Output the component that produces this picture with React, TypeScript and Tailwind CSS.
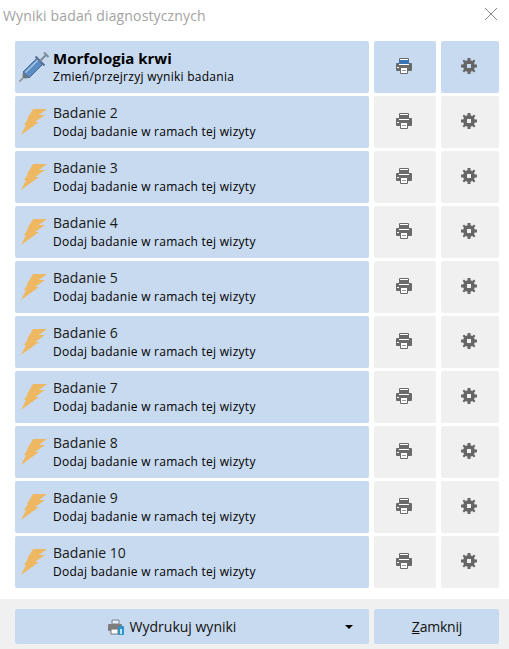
function Syringe() {
    return <svg width="32" height="32" viewBox="0 0 32 32" className="shrink-0">
        <path d="M1.5 30.5 L8 24" stroke="#8a8f94" strokeWidth="1.6" fill="none" />
        <path d="M5 21 L19 7 L25 13 L11 27 Z" fill="#5b8dc4" stroke="#44658c" strokeWidth="1" />
        <path d="M7.5 21.5 L20 9" stroke="#a9c8e8" strokeWidth="1.5" fill="none" />
        <path d="M4.5 25.5 L5 21 L11 27 L6.5 27.5 Z" fill="#6b7680" />
        <path d="M17.5 5.5 L26.5 14.5" stroke="#55708f" strokeWidth="2" />
        <path d="M22 10 L28 4 M26 1.5 L30.5 6" stroke="#7d8c9b" strokeWidth="2" fill="none" />
    </svg>
}

function Bolt() {
    return <svg width="28" height="28" viewBox="0 0 28 28" className="shrink-0">
        <path d="M13 1 L27 1 L19 7 L25 7 L15 14 L19 14 L1 27 L6 17 L4 17 L8 11 L7 11 Z" fill="#eeb863" />
    </svg>
}

function Printer({ accent }: { accent: string }) {
    return <svg width="16" height="16" viewBox="0 0 16 16">
        <path d="M3.5 0.5 H12.5 V5 H3.5 Z" fill="#fff" stroke="#6a6a6a" strokeWidth="1" />
        <rect x="0" y="5" width="16" height="8" rx="1" fill="#6a6a6a" />
        <rect x="3" y="2" width="10" height="4" fill={accent} />
        <rect x="3" y="6" width="10" height="1" fill="#fff" />
        <rect x="1" y="9" width="2" height="1" fill="#fff" />
        <path d="M4.5 9.5 H11.5 V15.5 H4.5 Z" fill="#fff" stroke="#6a6a6a" strokeWidth="1" />
        <rect x="6" y="12" width="4" height="1" fill="#9a9a9a" />
    </svg>
}

function Gear() {
    return <svg width="16" height="16" viewBox="0 0 16 16">
        <path d="M6.5 0 H9.5 V2.2 L11.3 3 L13 1.6 L14.4 3 L13 4.7 L13.8 6.5 H16 V9.5 H13.8 L13 11.3 L14.4 13 L13 14.4 L11.3 13 L9.5 13.8 V16 H6.5 V13.8 L4.7 13 L3 14.4 L1.6 13 L3 11.3 L2.2 9.5 H0 V6.5 H2.2 L3 4.7 L1.6 3 L3 1.6 L4.7 3 L6.5 2.2 Z M6 6 V10 H10 V6 Z" fill="#666666" fillRule="evenodd" />
    </svg>
}

function Row({ title, sub, active }: { title: string; sub: string; active?: boolean }) {
    const side = active ? "bg-[#c8daef]" : "bg-[#f0f0f0]"
    return <div className="flex gap-[5px] h-[52px]">
        <div className="w-[354px] bg-[#c8daef] rounded-[2px] flex items-center">
            <div className={active ? "w-[38px] pl-[3px]" : "w-[38px] pl-[5px]"}>
                {active ? <Syringe /> : <Bolt />}
            </div>
            <div className="flex flex-col pb-[1px]">
                <span className={active ? "text-[15px] leading-[20px] font-bold text-black" : "text-[14px] leading-[20px] text-[#1a1a1a]"}>{title}</span>
                <span className="text-[12px] leading-[17px] text-black tracking-[0.27px]">{sub}</span>
            </div>
        </div>
        <div className={`w-[62px] rounded-[2px] flex items-center justify-center pr-[2px] pb-[2px] ${side}`}>
            <Printer accent={active ? "#3a74b4" : "#6a6a6a"} />
        </div>
        <div className={`w-[58px] rounded-[2px] flex items-center justify-center pr-[2px] pb-[2px] ${side}`}>
            <Gear />
        </div>
    </div>
}

export default function App() {
    const rows = [2, 3, 4, 5, 6, 7, 8, 9, 10]

    return <div className="w-[509px] h-[649px] bg-white flex flex-col overflow-hidden font-['Open_Sans',sans-serif]">
        <div className="h-[41px] flex justify-between pl-[3px] pr-[11px] pt-[6px]">
            <span className="text-[14px] leading-[19px] text-[#a3a3a3] tracking-[0.14px]">Wyniki badań diagnostycznych</span>
            <svg width="14" height="14" viewBox="0 0 14 14" className="mt-[1px]">
                <path d="M1 1 L13 13 M13 1 L1 13" stroke="#8c8c8c" strokeWidth="1" />
            </svg>
        </div>
        <div className="flex flex-col gap-[3px] pl-[15px]">
            <Row title="Morfologia krwi" sub="Zmień/przejrzyj wyniki badania" active />
            {rows.map(n => <Row key={n} title={`Badanie ${n}`} sub="Dodaj badanie w ramach tej wizyty" />)}
        </div>
        <div className="mt-[11px] flex-1 bg-[#f0f0f0] flex gap-[5px] pl-[15px] pt-[10px]">
            <div className="w-[354px] h-[35px] bg-[#c8daef] rounded-[2px] flex items-center relative justify-center">
                <div className="flex items-center gap-[6px] pr-[40px]">
                    <svg width="16" height="16" viewBox="0 0 16 16">
                        <path d="M4 1 H11 V5 H4 Z" fill="#e8eef5" stroke="#7a8590" strokeWidth="1" />
                        <rect x="0" y="5" width="14" height="7" rx="1" fill="#7d7d7d" />
                        <rect x="3" y="10" width="7" height="5" fill="#fff" stroke="#777" strokeWidth="1" />
                        <rect x="10" y="7" width="6" height="9" rx="1" fill="#2f93c9" />
                        <rect x="12" y="10" width="2" height="5" fill="#bfe6f5" />
                    </svg>
                    <span className="text-[14px] text-[#111]">Wydrukuj wyniki</span>
                </div>
                <div className="absolute left-[330px] top-[16px] w-0 h-0 border-l-[4px] border-r-[4px] border-t-[4px] border-l-transparent border-r-transparent border-t-black" />
            </div>
            <div className="w-[125px] h-[35px] bg-[#c8daef] rounded-[2px] flex items-center justify-center pl-[1px]">
                <span className="text-[14px] text-[#111] tracking-[-0.2px]"><span className="underline">Z</span>amknij</span>
            </div>
        </div>
    </div>
}
